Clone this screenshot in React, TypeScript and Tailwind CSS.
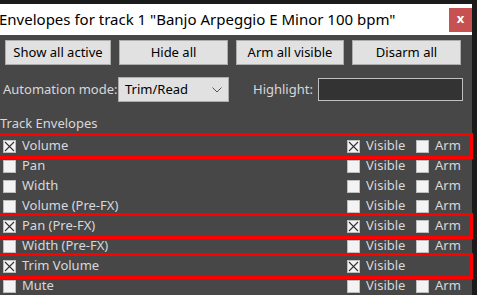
import React from "react";

type Row = { name: string; on: boolean; visible: boolean; arm: boolean | null; mark?: boolean };

const rows: Row[] = [
  { name: "Volume", on: true, visible: true, arm: false, mark: true },
  { name: "Pan", on: false, visible: false, arm: false },
  { name: "Width", on: false, visible: false, arm: false },
  { name: "Volume (Pre-FX)", on: false, visible: false, arm: false },
  { name: "Pan (Pre-FX)", on: true, visible: true, arm: false, mark: true },
  { name: "Width (Pre-FX)", on: false, visible: false, arm: false },
  { name: "Trim Volume", on: true, visible: true, arm: null, mark: true },
  { name: "Mute", on: false, visible: false, arm: false },
];

const Box = ({ checked }: { checked: boolean }) => (
  <div className="w-[13px] h-[13px] bg-[#f3f3f3] border border-[#bdbdbd] shrink-0">
    {checked && (
      <svg width="11" height="11" viewBox="0 0 11 11">
        <path d="M1 1L10 10M10 1L1 10" stroke="#333" strokeWidth="1.1" />
      </svg>
    )}
  </div>
);

const Button = ({ label, w }: { label: string; w: string }) => (
  <button
    className={`${w} h-[25px] bg-[#e1e1e1] border border-[#adadad] text-[13px] text-black leading-none`}
  >
    {label}
  </button>
);

export default function App() {
  return (
    <div
      className="w-[477px] h-[295px] bg-[#1b1b1b] overflow-hidden pt-[4px] pr-[5px]"
      style={{ fontFamily: '"Noto Sans", "Open Sans", sans-serif' }}
    >
      {/* title bar */}
      <div className="h-[31px] bg-white flex items-center justify-between">
        <span className="text-[15px] text-black -ml-[1px]">
          Envelopes for track 1 "Banjo Arpeggio E Minor 100 bpm"
        </span>
        <div className="w-[23px] h-[24px] bg-[#c75050] text-white text-[13px] font-bold flex items-center justify-center leading-none pb-[3px]">
          x
        </div>
      </div>

      {/* body */}
      <div className="h-[260px] bg-[#474747] text-[13px] text-[#d8d8dc]">
        <div className="flex pt-[5px] pl-[5px] gap-[8px]">
          <Button label="Show all active" w="w-[106px]" />
          <Button label="Hide all" w="w-[109px]" />
          <Button label="Arm all visible" w="w-[108px]" />
          <Button label="Disarm all" w="w-[109px]" />
        </div>

        <div className="flex items-center mt-[12px] h-[25px]">
          <span className="pl-[3px] w-[118px]">Automation mode:</span>
          <div className="w-[111px] h-[25px] bg-[#e1e1e1] border border-[#adadad] flex items-center justify-between pl-[6px] pr-[6px] text-black">
            <span>Trim/Read</span>
            <svg width="10" height="6" viewBox="0 0 10 6">
              <path d="M0.5 0.5L5 5L9.5 0.5" stroke="#555" fill="none" strokeWidth="1" />
            </svg>
          </div>
          <span className="ml-[24px] w-[65px]">Highlight:</span>
          <div className="w-[145px] h-[23px] bg-[#333333] border border-[#c0c0c0]" />
        </div>

        <div className="mt-[12px] h-[20px] flex items-center">Track Envelopes</div>

        <div className="mt-[2px]">
          {rows.map((r) => (
            <div key={r.name} className="relative h-[20px] flex items-center">
              {r.mark && (
                <div className="absolute left-[-4px] right-[-1px] top-[-3px] bottom-[-3px] border-[3px] border-[#ff0000]" />
              )}
              <div className="w-[22px] pl-[3px]">
                <Box checked={r.on} />
              </div>
              <span className="w-[325px]">{r.name}</span>
              <Box checked={r.visible} />
              <span className="ml-[6px] w-[50px]">Visible</span>
              {r.arm !== null && (
                <>
                  <Box checked={r.arm} />
                  <span className="ml-[6px]">Arm</span>
                </>
              )}
            </div>
          ))}
        </div>
      </div>
    </div>
  );
}
